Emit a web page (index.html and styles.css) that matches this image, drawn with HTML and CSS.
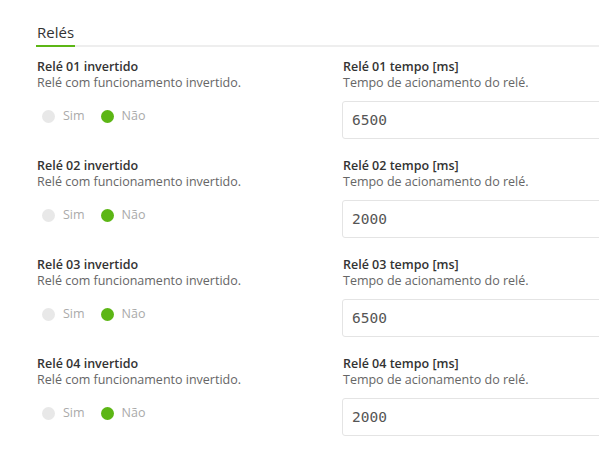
FILE: index.html
```html
<!DOCTYPE html>
<html lang="pt-BR">
<head>
    <meta charset="UTF-8">
    <title>Relés</title>
    <link rel="stylesheet" href="styles.css">
</head>
<body>
    <main class="page">
        <nav class="tabs">
            <span class="tab active">Relés</span>
        </nav>

        <section class="relay">
            <div class="field">
                <div class="field-label">Relé 01 invertido</div>
                <div class="field-desc">Relé com funcionamento invertido.</div>
                <div class="radios">
                    <label class="radio"><span class="dot"></span>Sim</label>
                    <label class="radio"><span class="dot on"></span>Não</label>
                </div>
            </div>
            <div class="field">
                <div class="field-label">Relé 01 tempo [ms]</div>
                <div class="field-desc">Tempo de acionamento do relé.</div>
                <input class="num" type="text" value="6500">
            </div>
        </section>

        <section class="relay">
            <div class="field">
                <div class="field-label">Relé 02 invertido</div>
                <div class="field-desc">Relé com funcionamento invertido.</div>
                <div class="radios">
                    <label class="radio"><span class="dot"></span>Sim</label>
                    <label class="radio"><span class="dot on"></span>Não</label>
                </div>
            </div>
            <div class="field">
                <div class="field-label">Relé 02 tempo [ms]</div>
                <div class="field-desc">Tempo de acionamento do relé.</div>
                <input class="num" type="text" value="2000">
            </div>
        </section>

        <section class="relay">
            <div class="field">
                <div class="field-label">Relé 03 invertido</div>
                <div class="field-desc">Relé com funcionamento invertido.</div>
                <div class="radios">
                    <label class="radio"><span class="dot"></span>Sim</label>
                    <label class="radio"><span class="dot on"></span>Não</label>
                </div>
            </div>
            <div class="field">
                <div class="field-label">Relé 03 tempo [ms]</div>
                <div class="field-desc">Tempo de acionamento do relé.</div>
                <input class="num" type="text" value="6500">
            </div>
        </section>

        <section class="relay">
            <div class="field">
                <div class="field-label">Relé 04 invertido</div>
                <div class="field-desc">Relé com funcionamento invertido.</div>
                <div class="radios">
                    <label class="radio"><span class="dot"></span>Sim</label>
                    <label class="radio"><span class="dot on"></span>Não</label>
                </div>
            </div>
            <div class="field">
                <div class="field-label">Relé 04 tempo [ms]</div>
                <div class="field-desc">Tempo de acionamento do relé.</div>
                <input class="num" type="text" value="2000">
            </div>
        </section>
    </main>
</body>
</html>
```

FILE: styles.css
```css
body {
    margin: 0;
    background: #fff;
    color: #333;
    font-family: "Open Sans", Arial, sans-serif;
    overflow: hidden;
}

.page {
    padding: 21px 0 0 36px;
}

.tabs {
    display: flex;
    border-bottom: 2px solid #eeeeee;
    margin-bottom: 12px;
}

.tab {
    font-size: 15px;
    line-height: 22px;
    padding: 0 1px 2px;
    color: #333;
    margin-bottom: -2px;
}

.tab.active {
    border-bottom: 2px solid #5cb615;
}

.relay {
    display: grid;
    grid-template-columns: 306px 1fr;
    height: 99px;
}

.field {
    padding-left: 1px;
}

.field-label {
    font-size: 12.5px;
    font-weight: 600;
    line-height: 16px;
    color: #333;
}

.field-desc {
    font-size: 12.5px;
    line-height: 16px;
    color: #666;
}

.radios {
    display: flex;
    gap: 16px;
    margin: 18px 0 0 5px;
}

.radio {
    display: flex;
    align-items: center;
    gap: 8px;
    font-size: 12.5px;
    line-height: 14px;
    color: #aaa;
}

.dot {
    width: 13px;
    height: 13px;
    border-radius: 50%;
    background: #e8e8e8;
}

.dot.on {
    background: #5cb615;
}

.num {
    display: block;
    box-sizing: border-box;
    width: calc(100% + 4px);
    height: 38px;
    margin: 10px 0 0 -1px;
    padding: 0 9px;
    border: 1px solid #e4e4e4;
    border-radius: 3px;
    font-family: "DejaVu Sans Mono", monospace;
    font-size: 14.5px;
    color: #555;
    outline: none;
}
```
